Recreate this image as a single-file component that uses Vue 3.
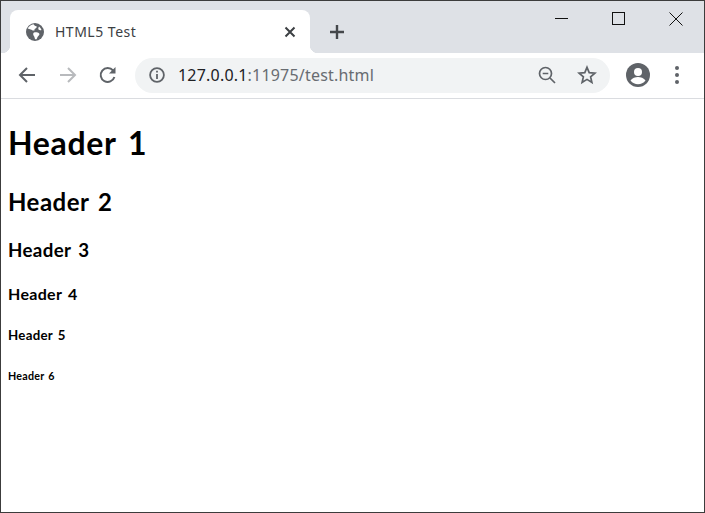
<script setup>
const headings = [
  { tag: 'h1', text: 'Header 1' },
  { tag: 'h2', text: 'Header 2' },
  { tag: 'h3', text: 'Header 3' },
  { tag: 'h4', text: 'Header 4' },
  { tag: 'h5', text: 'Header 5' },
  { tag: 'h6', text: 'Header 6' },
]
</script>

<template>
  <div class="window">
    <div class="tabstrip">
      <div class="tab">
        <svg class="favicon" width="18" height="18" viewBox="0 0 18 18">
          <circle cx="9" cy="9" r="9" fill="#5f6368" />
          <path d="M7.500 1.200C8 2 8.800 3 10.500 3.200c.500.800 0 1.800-1 2.300-.800.400-1.200 1-1 2-1 .300-2 0-3-.800L1.700 5.500C2.800 3.300 5 1.600 7.500 1.200zM8 9.500c1.600-.500 3.800-.300 5 .800.500.500.500 1.200.200 1.800-.500.800-1.300 1.200-1.700 2-.300.800-.500 1.700-1 2.200-1 .300-1.700-.300-1.800-1.300-.200-1-.400-1.600-1-2.300C7 11.700 7 10 8 9.500zM13 3.500c1 .800 2 2 2.500 3.500-1 .500-2.200.300-3-.500-.500-.800 0-2.200.500-3z" fill="#fff" />
        </svg>
        <span class="tab-title">HTML5 Test</span>
        <svg class="tab-close" width="12" height="12" viewBox="0 0 12 12">
          <path d="M1.500 1.500l9 9M10.500 1.500l-9 9" stroke="#3c4043" stroke-width="2" fill="none" />
        </svg>
      </div>
      <svg class="newtab" width="16" height="16" viewBox="0 0 16 16">
        <path d="M8 1v14M1 8h14" stroke="#44474b" stroke-width="2.400" fill="none" />
      </svg>
      <div class="winctrl">
        <svg width="14" height="14" viewBox="0 0 14 14"><path d="M0 6.500h13" stroke="#111" fill="none" /></svg>
        <svg width="14" height="14" viewBox="0 0 14 14"><rect x=".5" y=".5" width="12" height="12" stroke="#111" fill="none" /></svg>
        <svg width="14" height="14" viewBox="0 0 14 14"><path d="M.5.500l13 13M13.500.500l-13 13" stroke="#111" fill="none" /></svg>
      </div>
    </div>

    <div class="toolbar">
      <div class="navs">
        <svg width="18" height="18" viewBox="0 0 18 18"><path d="M17 9H2.500M9 2L2 9l7 7" stroke="#5f6368" stroke-width="2" fill="none" /></svg>
        <svg width="18" height="18" viewBox="0 0 18 18"><path d="M1 9h14.500M9 2l7 7-7 7" stroke="#b8babd" stroke-width="2" fill="none" /></svg>
        <svg width="18" height="18" viewBox="0 0 18 18"><path d="M15.400 11a7 7 0 1 1-1.300-6.500" stroke="#5f6368" stroke-width="2" fill="none" /><path d="M16.500 1v6.500H10z" fill="#5f6368" /></svg>
      </div>
      <div class="omnibox">
        <svg class="info" width="16" height="16" viewBox="0 0 16 16"><circle cx="8" cy="8" r="6.900" stroke="#5f6368" stroke-width="1.800" fill="none" /><path d="M8 7v5" stroke="#5f6368" stroke-width="1.800" /><path d="M8 3.800v1.800" stroke="#5f6368" stroke-width="1.800" /></svg>
        <div class="url"><span class="host">127.0.0.1</span>:11975/test.html</div>
        <svg class="zoom" width="18" height="18" viewBox="0 0 18 18"><circle cx="7.500" cy="7.500" r="6" stroke="#5f6368" stroke-width="1.700" fill="none" /><path d="M4.700 7.500h5.600M12 12l5 5" stroke="#5f6368" stroke-width="1.700" fill="none" /></svg>
        <svg class="star" width="20" height="20" viewBox="0 0 20 20"><path d="M10 2.300l2.200 5.300 5.700.500-4.300 3.700 1.300 5.600-4.900-3-4.900 3 1.300-5.600-4.300-3.700 5.700-.500z" stroke="#5f6368" stroke-width="1.700" fill="none" /></svg>
      </div>
      <svg class="avatar" width="24" height="24" viewBox="0 0 24 24">
        <circle cx="12" cy="12" r="12" fill="#5f6368" />
        <circle cx="12" cy="9" r="4" fill="#fff" />
        <path d="M4.500 17.500c1.500-2.500 5-3.500 7.500-3.500s6 1 7.500 3.500C17.500 20 15 21.200 12 21.200s-5.500-1.200-7.500-3.700z" fill="#fff" />
      </svg>
      <div class="dots"><i></i><i></i><i></i></div>
    </div>

    <div class="page">
      <component :is="h.tag" v-for="h in headings" :key="h.tag">{{ h.text }}</component>
    </div>
  </div>
</template>

<style>
html, body { margin: 0; }
</style>

<style scoped>
.window {
  width: 705px; height: 513px; box-sizing: border-box;
  border: 1px solid #3c3c3c;
  background: #fff; overflow: hidden;
  font-family: Lato, "Noto Sans", sans-serif;
}
.tabstrip {
  height: 52px; box-sizing: border-box; padding: 9px 0 0 9px;
  background: #dee1e6;
  display: flex; align-items: flex-start;
}
.tab {
  position: relative;
  width: 300px; height: 43px; box-sizing: border-box;
  padding: 0 14px 0 16px;
  background: #fff; border-radius: 8px 8px 0 0;
  display: flex; align-items: center;
}
.tab::before, .tab::after {
  content: ''; position: absolute; bottom: 0; width: 8px; height: 8px;
}
.tab::before { left: -8px; background: radial-gradient(circle at 0 0, #dee1e6 8px, #fff 8.5px); }
.tab::after { right: -8px; background: radial-gradient(circle at 100% 0, #dee1e6 8px, #fff 8.5px); }
.favicon { flex: none; }
.tab-title {
  margin-left: 11px; font-size: 14px; color: #3c4043;
  font-family: "Noto Sans", sans-serif; letter-spacing: .5px;
}
.tab-close { margin-left: auto; }
.newtab { margin: 14px 0 0 19px; }
.winctrl {
  margin-left: auto; display: flex; gap: 43px; padding: 2px 21px 0 0;
}
.toolbar {
  height: 46px; box-sizing: border-box;
  border-bottom: 1px solid #dadce0;
  display: flex; align-items: center; padding: 0 0 1px 17px;
}
.navs { display: flex; gap: 22.500px; align-items: center; }
.omnibox {
  margin-left: 18px;
  width: 475px; height: 35px; box-sizing: border-box; border-radius: 18px;
  background: #f1f3f4; padding: 0 13px 0 14px;
  display: flex; align-items: center;
}
.info { flex: none; }
.url {
  margin-left: 13px; font-size: 16px; color: #686c71;
  font-family: "Noto Sans", sans-serif; letter-spacing: .2px;
}
.host { color: #202124; }
.zoom { margin-left: auto; }
.star { margin-left: 21px; }
.avatar { margin-left: 16px; }
.dots {
  margin-left: 25px; display: flex; flex-direction: column; gap: 3px;
}
.dots i { width: 4px; height: 4px; border-radius: 50%; background: #5f6368; display: block; }
.page { padding: 2px 7px 0; color: #000; }
h1, h2, h3, h4, h5, h6 { font-weight: 700; line-height: 1.33; word-spacing: .12em; letter-spacing: .02em; }
h1 { font-size: 32px; margin: 21.44px 0; }
h2 { font-size: 24px; margin: 19.92px 0; }
h3 { font-size: 18.72px; margin: 18.72px 0; }
h4 { font-size: 16px; margin: 20.28px 0 21.28px; }
h5 { font-size: 13.28px; margin: 22.18px 0; }
h6 { font-size: 10.72px; margin: 24.98px 0; }
</style>
